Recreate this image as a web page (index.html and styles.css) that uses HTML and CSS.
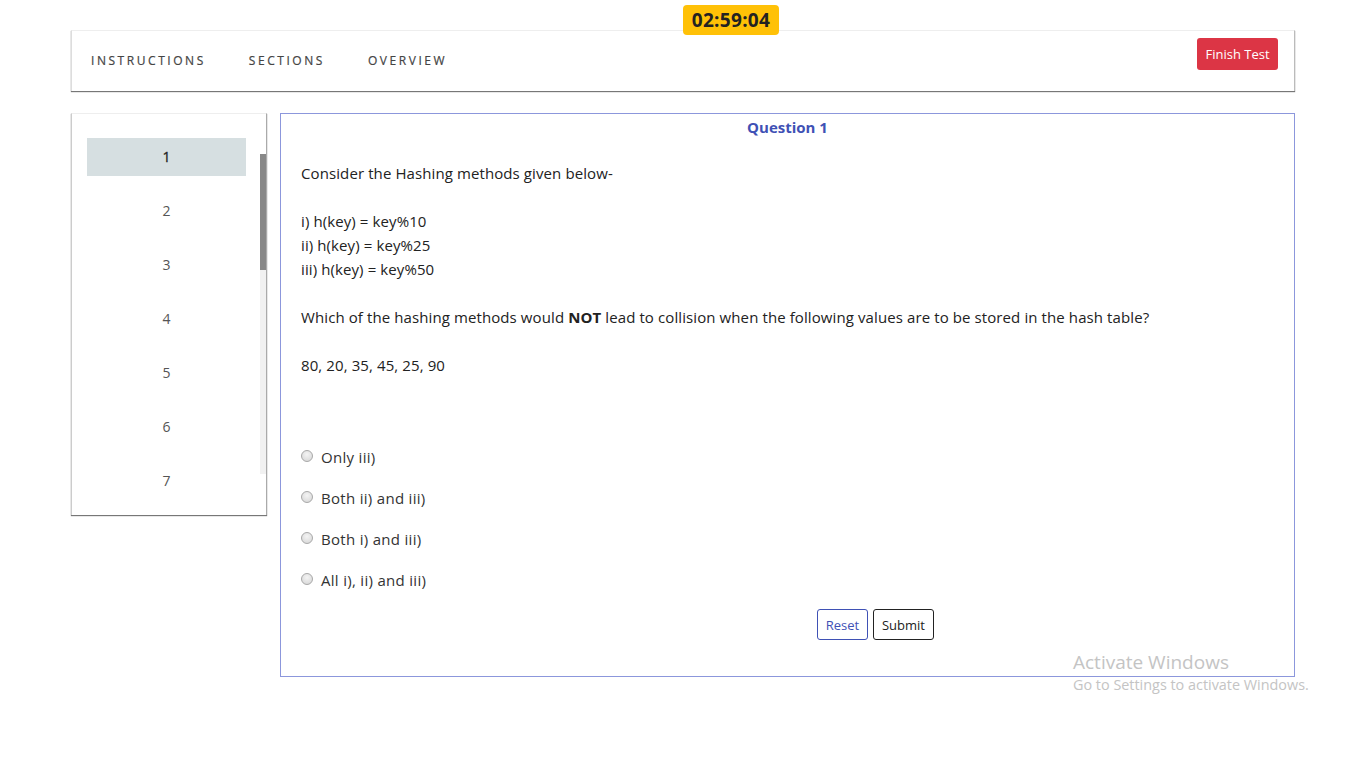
FILE: index.html
```html
<!DOCTYPE html>
<html>
<head>
<meta charset="utf-8">
<link rel="stylesheet" href="styles.css">
</head>
<body>
<div class="timer">02:59:04</div>
<div class="page">
  <header class="navbar">
    <nav class="tabs">
      <a class="tab">INSTRUCTIONS</a>
      <a class="tab">SECTIONS</a>
      <a class="tab">OVERVIEW</a>
    </nav>
    <button class="finish">Finish Test</button>
  </header>
  <main class="main">
    <aside class="sidebar">
      <ul class="qlist">
        <li class="qitem active">1</li>
        <li class="qitem">2</li>
        <li class="qitem">3</li>
        <li class="qitem">4</li>
        <li class="qitem">5</li>
        <li class="qitem">6</li>
        <li class="qitem">7</li>
      </ul>
      <div class="scrolltrack"><div class="scrollthumb"></div></div>
    </aside>
    <section class="question">
      <h2 class="qtitle">Question 1</h2>
      <div class="qbody">
        <p>Consider the Hashing methods given below-</p>
        <p>i) h(key) = key%10<br>ii) h(key) = key%25<br>iii) h(key) = key%50</p>
        <p>Which of the hashing methods would <b>NOT</b> lead to collision when the following values are to be stored in the hash table?</p>
        <p>80, 20, 35, 45, 25, 90</p>
      </div>
      <div class="options">
        <label class="opt"><input type="radio" name="a"><span>Only iii)</span></label>
        <label class="opt"><input type="radio" name="a"><span>Both ii) and iii)</span></label>
        <label class="opt"><input type="radio" name="a"><span>Both i) and iii)</span></label>
        <label class="opt"><input type="radio" name="a"><span>All i), ii) and iii)</span></label>
      </div>
      <div class="actions">
        <button class="btn reset">Reset</button>
        <button class="btn submit">Submit</button>
      </div>
    </section>
  </main>
</div>
<div class="watermark">
  <div class="wm1">Activate Windows</div>
  <div class="wm2">Go to Settings to activate Windows.</div>
</div>
</body>
</html>
```
FILE: styles.css
```css
* { box-sizing: border-box; }
html, body { margin: 0; padding: 0; background: #fff; }
body {
  font-family: "Open Sans", "Noto Sans", sans-serif;
  color: #222;
  position: relative;
  height: 768px;
  overflow: hidden;
}
.timer {
  position: absolute;
  left: 683px;
  top: 5px;
  width: 96px;
  height: 30px;
  background: #ffc107;
  border-radius: 4px;
  font-weight: 700;
  font-size: 19px;
  line-height: 30px;
  text-align: center;
  color: #222;
  letter-spacing: 0.3px;
  z-index: 2;
}
.page {
  padding: 30px 71px 0 71px;
}
.navbar {
  height: 61px;
  border-top: 1px solid #eee;
  border-left: 1px solid #ddd;
  border-right: 1px solid #bbb;
  box-shadow: 0 1px 1px #777;
  display: flex;
  align-items: flex-start;
  justify-content: space-between;
  padding: 0 16px 0 19px;
}
.tabs {
  display: flex;
  gap: 43px;
  padding-top: 21px;
}
.tab {
  font-size: 12px;
  letter-spacing: 2.55px;
  color: #444;
  line-height: 18px;
  font-weight: 400;
  -webkit-text-stroke: 0.2px #444;
}
.finish {
  margin-top: 7px;
  background: #dc3545;
  color: #fff;
  border: none;
  border-radius: 3px;
  font-family: "Open Sans", sans-serif;
  font-size: 13px;
  height: 32px;
  width: 81px;
  padding: 0;
}
.main {
  display: flex;
  gap: 13px;
  margin-top: 22px;
  align-items: flex-start;
}
.sidebar {
  position: relative;
  width: 196px;
  border-top: 1px solid #eee;
  border-left: 1px solid #ccc;
  border-right: 1px solid #aaa;
  box-shadow: 0 1px 1px #777;
  padding: 24px 20px 15px 15px;
}
.qlist {
  list-style: none;
  margin: 0;
  padding: 0;
  display: flex;
  flex-direction: column;
  gap: 16px;
}
.qitem {
  height: 38px;
  line-height: 38px;
  text-align: center;
  font-size: 14px;
  color: #555;
  font-family: "Open Sans", sans-serif;
}
.qitem.active {
  background: #d6dfe1;
  color: #222;
  -webkit-text-stroke: 0.3px #222;
}
.scrolltrack {
  position: absolute;
  left: 188px;
  top: 40px;
  width: 6px;
  height: 320px;
  background: #f1f1f1;
}
.scrollthumb {
  height: 116px;
  background: #888;
}
.question {
  width: 1015px;
  height: 564px;
  border: 1px solid #8c97dc;
  padding: 0 20px;
}
.qtitle {
  margin: 0;
  text-align: center;
  font-size: 15px;
  font-weight: 700;
  color: #3f51b5;
  line-height: 26px;
}
.qbody {
  margin-top: 21px;
  font-size: 15px;
  letter-spacing: 0.1px;
  line-height: 24px;
  color: #222;
}
.qbody p {
  margin: 0 0 24px 0;
}
.qbody p:last-child { margin-bottom: 0; }
.qbody b { font-weight: 700; }
.options {
  margin-top: 68px;
  display: flex;
  flex-direction: column;
  gap: 17px;
}
.opt {
  display: flex;
  align-items: center;
  height: 24px;
  font-size: 15px;
  letter-spacing: 0.3px;
  color: #333;
}
.opt input {
  -webkit-appearance: none;
  appearance: none;
  width: 12px;
  height: 12px;
  border-radius: 50%;
  border: 1px solid #a8a8a8;
  background: radial-gradient(circle at 50% 35%, #f4f4f4, #d4d4d4);
  margin: 0 8px 2px 0;
}
.actions {
  display: flex;
  gap: 5px;
  margin-top: 17px;
  padding-left: 516px;
}
.btn {
  height: 31px;
  border-radius: 3px;
  background: #fff;
  font-family: "Open Sans", sans-serif;
  font-size: 13px;
  padding: 0;
}
.reset {
  width: 51px;
  border: 1px solid #3f51b5;
  color: #3f51b5;
}
.submit {
  width: 61px;
  border: 1px solid #222;
  color: #222;
}
.watermark {
  position: absolute;
  left: 1073px;
  top: 650px;
  color: #c4c4c4;
  font-family: "Open Sans", sans-serif;
}
.wm1 { font-size: 19px; line-height: 24px; }
.wm2 { font-size: 14.4px; line-height: 22px; }
```
